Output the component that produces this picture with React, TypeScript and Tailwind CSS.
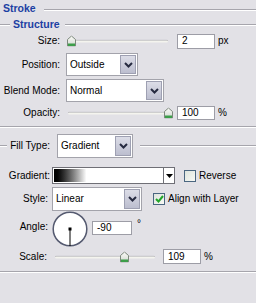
import React from "react";

function Groove({ className = "" }: { className?: string }) {
  return <div className={`border-t border-b border-t-[#a6a5ac] border-b-white ${className}`} />;
}

function Thumb() {
  return (
    <svg width="9" height="11" viewBox="0 0 9 11">
      <defs>
        <linearGradient id="tg" x1="0" y1="0" x2="0" y2="1">
          <stop offset="0" stopColor="#fbfbf8" />
          <stop offset="1" stopColor="#d2d8d0" />
        </linearGradient>
      </defs>
      <path d="M0.5 10.5 V4 L4.5 0.5 L8.5 4 V10.5 Z" fill="url(#tg)" stroke="#7d887c" />
      <rect x="1" y="8" width="7" height="2.5" fill="#3d9e4a" />
    </svg>
  );
}

function Slider({ className, thumb }: { className: string; thumb: string }) {
  return (
    <div className={`relative h-full ${className}`}>
      <div className="absolute left-0 right-0 top-1/2 -translate-y-1/2 h-[3px] rounded-full border-t border-[#a9a9ae] bg-[#f4f4ee]" />
      <div className={`absolute top-1/2 -translate-y-1/2 ${thumb}`}>
        <Thumb />
      </div>
    </div>
  );
}

function ArrowBtn() {
  return (
    <div className="w-[16px] my-[1px] mr-[1px] flex items-center justify-center border border-[#9ea0b2] bg-linear-to-b from-[#dcdde7] to-[#bcbecf]">
      <svg width="9" height="6" viewBox="0 0 9 6">
        <path d="M1 1 L4.5 4.5 L8 1" stroke="#262a40" strokeWidth="2" fill="none" />
      </svg>
    </div>
  );
}

function Select({ value, className }: { value: string; className: string }) {
  return (
    <div className={`flex border border-[#a3a3ab] bg-white ${className}`}>
      <span className="flex-1 flex items-center pl-[3px]">{value}</span>
      <ArrowBtn />
    </div>
  );
}

function Field({ value, className }: { value: string; className: string }) {
  return (
    <div className={`flex items-center border border-[#9d9da6] bg-white pl-[4px] ${className}`}>{value}</div>
  );
}

function Check({ checked }: { checked?: boolean }) {
  return (
    <div className="w-[12px] h-[12px] border border-[#4a6680] bg-linear-to-br from-[#dde4dd] to-[#f8f9f5] flex items-center justify-center">
      {checked && (
        <svg width="9" height="8" viewBox="0 0 9 8">
          <path d="M1 4 L3.5 6.5 L8 1" stroke="#22a52a" strokeWidth="2" fill="none" />
        </svg>
      )}
    </div>
  );
}

export default function App() {
  return (
    <div className="w-[256px] h-[303px] overflow-hidden bg-[#e2e1e6] text-black text-[10px] leading-none font-['Liberation_Sans',Arial,sans-serif]">
      {/* Stroke header */}
      <div className="flex items-center h-[17px] pl-[3px]">
        <span className="font-bold text-[#1c3fa3] text-[10.5px]">Stroke</span>
        <Groove className="flex-1 ml-[8px] mt-[3px]" />
      </div>
      {/* Structure */}
      <div className="flex items-center h-[14px]">
        <Groove className="w-[10px] mt-[1px]" />
        <span className="font-bold text-[#1c3fa3] text-[10.5px] ml-[3px]">Structure</span>
        <Groove className="flex-1 ml-[5px] mt-[1px]" />
      </div>

      {/* Size */}
      <div className="flex items-center h-[16px] mt-[2px]">
        <span className="w-[60px] text-right">Size:</span>
        <Slider className="w-[101px] ml-[7px]" thumb="left-0" />
        <Field value="2" className="w-[38px] h-[15px] ml-[9px]" />
        <span className="ml-[3px]">px</span>
      </div>

      {/* Position */}
      <div className="flex items-center h-[23px] mt-[4px]">
        <span className="w-[60px] text-right">Position:</span>
        <Select value="Outside" className="w-[72px] h-[23px] ml-[6px]" />
      </div>

      {/* Blend Mode */}
      <div className="flex items-center h-[23px] mt-[3px]">
        <span className="w-[60px] text-right">Blend Mode:</span>
        <Select value="Normal" className="w-[98px] h-[23px] ml-[6px]" />
      </div>

      {/* Opacity */}
      <div className="flex items-center h-[16px] mt-[3px]">
        <span className="w-[60px] text-right">Opacity:</span>
        <Slider className="w-[99px] ml-[8px]" thumb="left-[96px]" />
        <Field value="100" className="w-[38px] h-[14px] ml-[10px]" />
        <span className="ml-[3px]">%</span>
      </div>

      <Groove className="mt-[5px]" />

      {/* Fill Type */}
      <div className="flex items-center h-[24px] mt-[6px]">
        <Groove className="w-[7px]" />
        <span className="w-[40px] ml-[3px] text-right">Fill Type:</span>
        <Select value="Gradient" className="w-[76px] h-[24px] ml-[7px]" />
        <Groove className="flex-1 ml-[7px]" />
      </div>

      {/* Gradient */}
      <div className="flex items-center h-[17px] mt-[9px]">
        <span className="w-[50px] text-right">Gradient:</span>
        <div className="flex w-[123px] h-[17px] ml-[2px] border border-[#6f6f76] bg-white">
          <div className="flex-1 m-[1px] bg-linear-to-r from-black to-white to-[30%]" />
          <div className="w-[11px] border-l border-[#6f6f76] flex items-center justify-center">
            <svg width="7" height="4" viewBox="0 0 7 4">
              <path d="M0 0 H7 L3.5 4 Z" fill="#000" />
            </svg>
          </div>
        </div>
        <div className="ml-[9px]">
          <Check />
        </div>
        <span className="ml-[3px]">Reverse</span>
      </div>

      {/* Style */}
      <div className="flex items-center h-[24px] mt-[3px]">
        <span className="w-[48px] text-right">Style:</span>
        <Select value="Linear" className="w-[90px] h-[24px] ml-[4px]" />
        <div className="ml-[11px]">
          <Check checked />
        </div>
        <span className="ml-[3px]">Align with Layer</span>
      </div>

      {/* Angle */}
      <div className="flex items-center h-[36px]">
        <span className="w-[48px] text-right mb-[4px]">Angle:</span>
        <svg width="36" height="36" viewBox="0 0 36 36" className="ml-[4px]">
          <circle cx="18" cy="18" r="16.8" fill="#fff" stroke="#555a70" strokeWidth="1.5" />
          <rect x="16.5" y="16.5" width="3" height="3" fill="#000" />
          <line x1="18" y1="18" x2="18" y2="35" stroke="#000" strokeWidth="1" />
        </svg>
        <Field value="-90" className="w-[40px] h-[14px] ml-[4px] mb-[3px]" />
        <span className="ml-[5px] mb-[10px]">°</span>
      </div>

      {/* Scale */}
      <div className="flex items-center h-[15px] mt-[2px]">
        <span className="w-[47px] text-right">Scale:</span>
        <Slider className="w-[100px] ml-[8px]" thumb="left-[65px]" />
        <Field value="109" className="w-[38px] h-[15px] ml-[8px]" />
        <span className="ml-[3px]">%</span>
      </div>

      <Groove className="mt-[7px]" />
    </div>
  );
}
